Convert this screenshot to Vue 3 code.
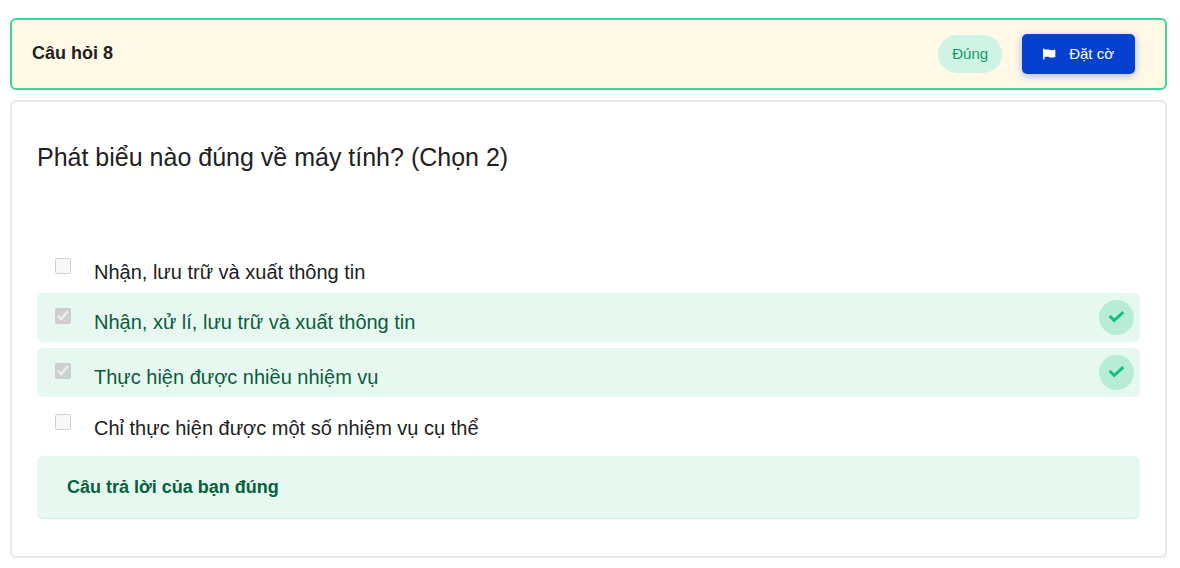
<script setup>
const options = [
  { id: 'a', text: 'Nhận, lưu trữ và xuất thông tin', chosen: false },
  { id: 'b', text: 'Nhận, xử lí, lưu trữ và xuất thông tin', chosen: true },
  { id: 'c', text: 'Thực hiện được nhiều nhiệm vụ', chosen: true },
  { id: 'd', text: 'Chỉ thực hiện được một số nhiệm vụ cụ thể', chosen: false }
]
</script>

<template>
  <main class="page">
    <header class="bar">
      <h2 class="title">Câu hỏi 8</h2>
      <span class="badge">Đúng</span>
      <button class="flag" type="button">
        <svg width="13" height="12" viewBox="0 0 13 12" aria-hidden="true">
          <path fill="currentColor" d="M0 .8Q.7 0 1.5 .8V1.8C3.5 1.2 5 1.3 6.5 1.8C8.4 2.4 10 2.3 12.3 1.6V9.1C10 9.8 8.3 9.7 6.4 9.2C4.8 8.7 3.3 8.8 1.5 9.2V11.6H0Z" />
        </svg>
        <span>Đặt cờ</span>
      </button>
    </header>

    <section class="card">
      <h3 class="question">Phát biểu nào đúng về máy tính? (Chọn 2)</h3>
      <div class="options">
        <div v-for="o in options" :key="o.id" class="option" :class="{ correct: o.chosen }">
          <input :id="'opt-' + o.id" class="box" type="checkbox" :checked="o.chosen" disabled />
          <label class="label" :for="'opt-' + o.id">{{ o.text }}</label>
          <span v-if="o.chosen" class="mark">
            <svg width="17" height="13" viewBox="0 0 17 13" aria-hidden="true">
              <path d="M1.7 5L6.2 9.5L15.3 1.2" fill="none" stroke="currentColor" stroke-width="3" />
            </svg>
          </span>
        </div>
      </div>
      <p class="result">Câu trả lời của bạn đúng</p>
    </section>
  </main>
</template>

<style>
body {
  background: #fff;
}
</style>

<style scoped>
.page {
  padding: 18px 13px 10px 10px;
  font-family: "Liberation Sans", Arial, sans-serif;
  color: #212121;
}
.bar {
  display: flex;
  align-items: center;
  box-sizing: border-box;
  min-height: 72px;
  padding: 14px 30px 14px 20px;
  border: 2px solid #3dd598;
  border-radius: 6px;
  background: #fff9e6;
}
.title {
  flex: 1;
  margin: 0;
  padding-bottom: 2px;
  font-size: 18px;
  line-height: 24px;
}
.badge {
  padding: 9px 14px;
  border-radius: 20px;
  background: #cff4e5;
  color: #159b62;
  font-size: 15px;
  line-height: 20px;
}
.flag {
  display: flex;
  align-items: center;
  gap: 13px;
  height: 40px;
  margin-left: 20px;
  padding: 0 21px;
  border: 0;
  border-radius: 5px;
  background: #0540d0;
  color: #fff;
  font: 15px/20px "Liberation Sans", Arial, sans-serif;
  box-shadow: 0 2px 8px rgba(5, 64, 208, 0.35);
}
.card {
  margin-top: 10px;
  padding: 38px 25px 37px;
  border: 2px solid #e7e7e7;
  border-radius: 6px;
}
.question {
  margin: 0;
  font-size: 25px;
  line-height: 34px;
  font-weight: 400;
}
.options {
  display: flex;
  flex-direction: column;
  gap: 1px;
  margin-top: 69px;
}
.option {
  display: flex;
  align-items: flex-start;
  box-sizing: border-box;
  min-height: 49px;
  padding: 7px 6px 7px 18px;
  border-radius: 6px;
}
.correct {
  background: #e7f8f1;
  color: #0a5c3c;
}
.correct + .option {
  margin-top: 1px;
}
.correct + .correct {
  margin-top: 5px;
}
.box {
  width: 16px;
  height: 16px;
  margin: 8px 23px 0 0;
}
.label {
  flex: 1;
  padding-top: 10px;
  font-size: 20px;
  line-height: 24px;
}
.mark {
  display: grid;
  place-items: center;
  width: 35px;
  height: 35px;
  border-radius: 50%;
  background: #b7edd7;
  color: #12bf7d;
}
.result {
  margin: 8px 0 0;
  padding: 19px 30px;
  border-bottom: 1px solid #cff1e3;
  border-radius: 6px;
  background: #e7f8f1;
  color: #056139;
  font-size: 18px;
  line-height: 24px;
  font-weight: 700;
}
</style>
